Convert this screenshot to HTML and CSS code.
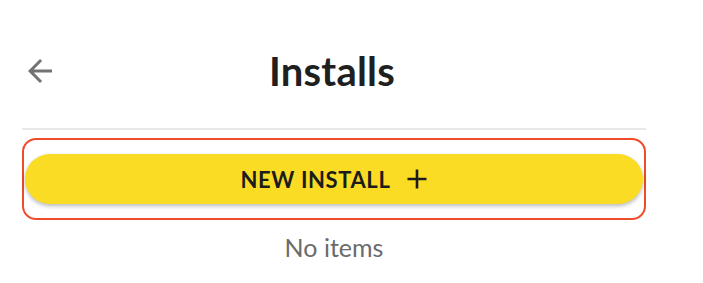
FILE: index.html
```html
<!DOCTYPE html>
<html lang="en">
<head>
<meta charset="utf-8">
<title>Installs</title>
<link rel="stylesheet" href="styles.css">
</head>
<body>
<div class="page">
  <header class="header">
    <button class="back" aria-label="Back">
      <svg viewBox="0 0 24 24" width="36" height="36"><path d="M20 11H7.83l5.59-5.59L12 4l-8 8 8 8 1.41-1.41L7.83 13H20v-2z" fill="#737373"/></svg>
    </button>
    <h1 class="title">Installs</h1>
    <span class="spacer"></span>
  </header>
  <div class="divider"></div>
  <div class="focus-ring">
    <button class="new-btn">
      <span class="new-label">NEW INSTALL</span>
      <svg class="plus" viewBox="0 0 20 20" width="20" height="20"><path d="M10 0.5v19M0.5 10h19" stroke="#1c1c1c" stroke-width="2.6" fill="none"/></svg>
    </button>
  </div>
  <p class="empty">No items</p>
</div>
</body>
</html>
```

FILE: styles.css
```css
* { box-sizing: border-box; }
html, body { margin: 0; padding: 0; background: #ffffff; }
body { font-family: "Lato", "Noto Sans", sans-serif; }

.page {
  width: 624px;
  margin-left: 22px;
}

.header {
  display: grid;
  grid-template-columns: 1fr auto 1fr;
  align-items: center;
  height: 46px;
  margin-top: 48px;
  margin-bottom: 34px;
}

.back {
  justify-self: start;
  background: none;
  border: 0;
  padding: 0;
  width: 36px;
  height: 36px;
  display: flex;
}

.title {
  margin: 0 4px 0 0;
  font-size: 40px;
  font-weight: 700;
  color: #1f1f1f;
  line-height: 46px;
  letter-spacing: 0.2px;
}

.divider {
  height: 2px;
  background: #e8e8e8;
}

.focus-ring {
  margin-top: 8px;
  border: 2px solid #f04b2b;
  border-radius: 14px;
  padding: 14px 1px 14px 1px;
}

.new-btn {
  width: 100%;
  height: 50px;
  border: 0;
  border-radius: 25px;
  background: #fbdc25;
  box-shadow: 0 2px 4px rgba(0, 0, 0, 0.28);
  display: flex;
  align-items: center;
  justify-content: center;
  gap: 17px;
  padding: 0 0 0 0;
  font-family: inherit;
}

.new-label {
  font-size: 22px;
  font-weight: 700;
  color: #1c1c1c;
  letter-spacing: 0.6px;
}

.plus { display: block; }

.empty {
  margin: 14px 0 0;
  text-align: center;
  font-size: 25px;
  line-height: 26px;
  color: #6b6b6b;
}
```
